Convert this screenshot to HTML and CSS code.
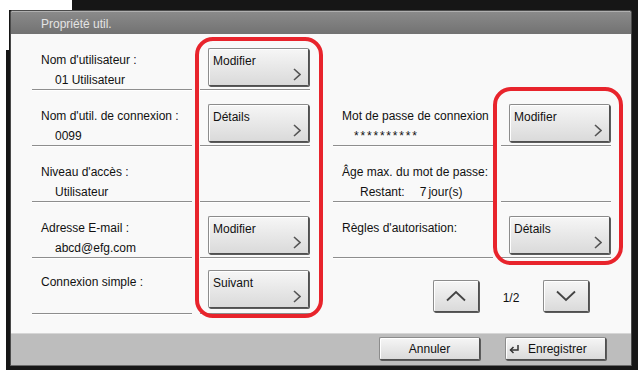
FILE: index.html
```html
<!DOCTYPE html>
<html lang="fr">
<head>
  <meta charset="UTF-8">
  <title>Propriété util.</title>
  <link rel="stylesheet" href="styles.css">
</head>
<body>
  <div class="screen">
    <div class="dialog">
      <div class="titlebar">Propriété util.</div>
      <div class="content">
        <div class="column">
          <div class="row">
            <div class="info">
              <div class="label">Nom d'utilisateur :</div>
              <div class="value">01 Utilisateur</div>
            </div>
            <div class="action">
              <button class="btn">Modifier<svg class="chev" viewBox="0 0 8 13"><polyline points="1,1 7,6.5 1,12"/></svg></button>
            </div>
          </div>
          <div class="row">
            <div class="info">
              <div class="label">Nom d'util. de connexion :</div>
              <div class="value">0099</div>
            </div>
            <div class="action">
              <button class="btn">Détails<svg class="chev" viewBox="0 0 8 13"><polyline points="1,1 7,6.5 1,12"/></svg></button>
            </div>
          </div>
          <div class="row">
            <div class="info">
              <div class="label">Niveau d'accès :</div>
              <div class="value">Utilisateur</div>
            </div>
            <div class="action"></div>
          </div>
          <div class="row">
            <div class="info">
              <div class="label">Adresse E-mail :</div>
              <div class="value">abcd@efg.com</div>
            </div>
            <div class="action">
              <button class="btn">Modifier<svg class="chev" viewBox="0 0 8 13"><polyline points="1,1 7,6.5 1,12"/></svg></button>
            </div>
          </div>
          <div class="row">
            <div class="info">
              <div class="label label-single">Connexion simple :</div>
            </div>
            <div class="action action-high">
              <button class="btn">Suivant<svg class="chev" viewBox="0 0 8 13"><polyline points="1,1 7,6.5 1,12"/></svg></button>
            </div>
          </div>
        </div>

        <div class="column column-right">
          <div class="row bare"></div>
          <div class="row">
            <div class="info">
              <div class="label">Mot de passe de connexion</div>
              <div class="value value-right">**********</div>
            </div>
            <div class="action">
              <button class="btn">Modifier<svg class="chev" viewBox="0 0 8 13"><polyline points="1,1 7,6.5 1,12"/></svg></button>
            </div>
          </div>
          <div class="row">
            <div class="info">
              <div class="label">Âge max. du mot de passe:</div>
              <div class="value value-days">Restant:<span class="days">7</span>jour(s)</div>
            </div>
            <div class="action"></div>
          </div>
          <div class="row">
            <div class="info">
              <div class="label">Règles d'autorisation:</div>
            </div>
            <div class="action">
              <button class="btn">Détails<svg class="chev" viewBox="0 0 8 13"><polyline points="1,1 7,6.5 1,12"/></svg></button>
            </div>
          </div>
          <div class="row bare">
            <div class="pager">
              <button class="btn btn-page"><svg class="arrow" viewBox="0 0 22 12"><polyline points="2,10.5 11,2 20,10.5"/></svg></button>
              <span class="page">1/2</span>
              <button class="btn btn-page"><svg class="arrow" viewBox="0 0 22 12"><polyline points="2,1.5 11,10 20,1.5"/></svg></button>
            </div>
          </div>
        </div>
      </div>
      <div class="footer">
        <button class="btn btn-bar">Annuler</button>
        <button class="btn btn-bar btn-save"><svg class="enter" viewBox="0 0 12 10"><path d="M10 1 V6 H2.5"/><path d="M5.5 3 L2.5 6 L5.5 9"/></svg>Enregistrer</button>
      </div>
    </div>
    <div class="callout callout-left"></div>
    <div class="callout callout-right"></div>
  </div>
</body>
</html>
```

FILE: styles.css
```css
body {
  margin: 0;
  background: #fff;
  font-family: "Liberation Sans", Arial, sans-serif;
  font-size: 12px;
  color: #111;
}
.screen {
  position: relative;
  width: 632px;
  height: 370px;
  box-sizing: border-box;
  margin-left: 6px;
  padding: 10px 6px 4px 4px;
  background: #161616;
}
/* the crop leaves the top-left corner of the screen white */
.screen:before,
.screen:after {
  content: '';
  position: absolute;
  left: 0;
  top: 0;
  background: #fff;
}
.screen:before { width: 66px; height: 10px; }
.screen:after { width: 3px; height: 50px; }

.dialog {
  display: flex;
  flex-direction: column;
  height: 356px;
  box-sizing: border-box;
  border: 1px solid #4a4a4a;
  border-bottom-color: #6a6a6a;
  border-radius: 3px 3px 0 0;
  background: #f9f9f9;
  overflow: hidden;
}
.titlebar {
  height: 23px;
  box-sizing: border-box;
  padding: 5px 0 0 30px;
  border-top: 1px solid #b0b0b0;
  background: linear-gradient(#8a8a8a, #727272);
  color: #e4e4e4;
  line-height: 14px;
}
.content {
  flex: 1;
  display: flex;
  gap: 23px;
  padding-left: 21px;
}
.column {
  display: flex;
  flex-direction: column;
  width: 278px;
}
.row {
  display: grid;
  grid-template-columns: 160px 110px;
  column-gap: 8px;
  height: 56px;
}
.info,
.action {
  border-bottom: 1px solid #8e8e8e;
  box-shadow: 0 1px 0 #fff;
}
.row.bare { display: flex; }
.info {
  padding: 19px 0 0 9px;
}
.label { line-height: 14px; }
.label-single { margin-top: -2px; }
.value {
  margin-top: 6px;
  padding-left: 14px;
  line-height: 14px;
}
.value-right {
  padding-left: 12px;
  letter-spacing: 1.8px;
}
.value-days { padding-left: 18px; }
.days { margin: 0 2px 0 15px; }
.action {
  padding: 14px 0 0 8px;
}
.action-high { padding-top: 12px; }

.btn {
  display: flex;
  flex-direction: column;
  width: 101px;
  height: 38px;
  box-sizing: border-box;
  margin: 0;
  padding: 5px 7px 4px 4px;
  border: 1px solid #8c8c8c;
  border-right-color: #4f4f4f;
  border-bottom-color: #4f4f4f;
  border-radius: 2px;
  background: linear-gradient(#f6f6f6, #dadada);
  box-shadow: 1px 1px 0 #5c5c5c, inset 1px 1px 0 #fff;
  font: inherit;
  color: #111;
  text-align: left;
  line-height: 14px;
}
.chev {
  align-self: flex-end;
  margin-top: auto;
  width: 8px;
  height: 13px;
  fill: none;
  stroke: #555;
  stroke-width: 1.6;
}

.pager {
  display: flex;
  align-items: center;
  width: 100%;
  padding: 22px 20px 0 100px;
  align-self: flex-start;
}
.btn-page {
  width: 46px;
  height: 32px;
  padding: 0;
  align-items: center;
  justify-content: center;
}
.arrow {
  width: 22px;
  height: 12px;
  fill: none;
  stroke: #444;
  stroke-width: 1.8;
}
.page {
  width: 64px;
  padding-top: 4px;
  text-align: center;
}

.footer {
  height: 32px;
  box-sizing: border-box;
  display: flex;
  justify-content: flex-end;
  gap: 25px;
  padding: 3px 25px 0 0;
  border-top: 1px solid #d6d6d6;
  background: #bdbdbd;
}
.btn-bar {
  flex-direction: row;
  align-items: center;
  justify-content: center;
  height: 23px;
  padding: 0;
}
.btn-save {
  justify-content: flex-start;
  padding-left: 2px;
}
.enter {
  width: 12px;
  height: 10px;
  margin-right: 8px;
  fill: none;
  stroke: #333;
  stroke-width: 1.5;
}

.callout {
  position: absolute;
  box-sizing: border-box;
  border: 4.5px solid #e8242c;
  border-radius: 18px;
}
.callout-left {
  left: 189px;
  top: 37px;
  width: 128px;
  height: 281px;
}
.callout-right {
  left: 487px;
  top: 87px;
  width: 130px;
  height: 178px;
}
```
